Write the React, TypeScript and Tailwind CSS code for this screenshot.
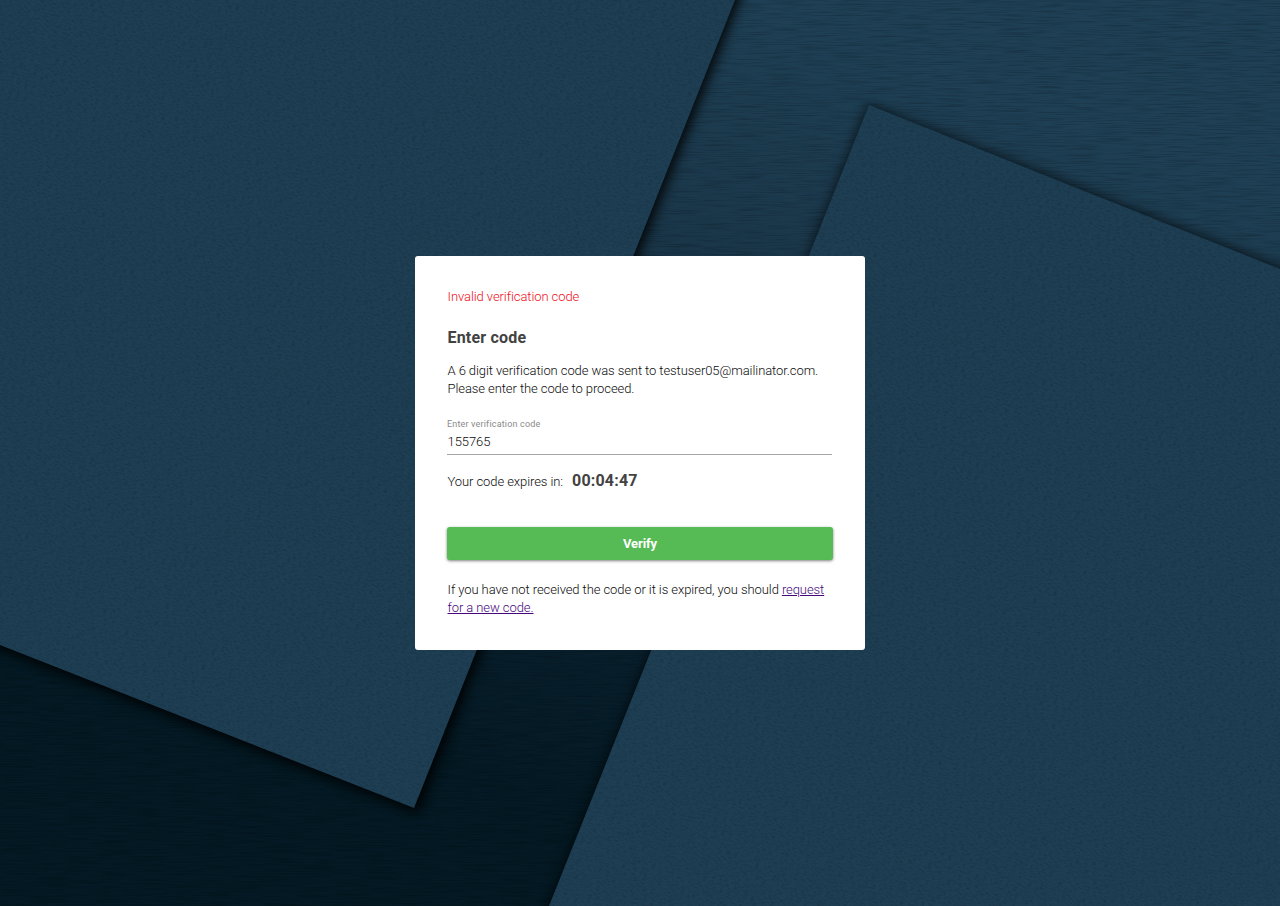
function Backdrop() {
  return (
    <svg className="absolute inset-0 h-full w-full" viewBox="0 0 1280 906" preserveAspectRatio="xMidYMid slice" aria-hidden="true">
      <defs>
        <linearGradient id="base" gradientUnits="userSpaceOnUse" x1="900" y1="60" x2="640" y2="830">
          <stop offset="0" stopColor="#1e3f54" />
          <stop offset="0.25" stopColor="#1b384b" />
          <stop offset="0.75" stopColor="#09202e" />
          <stop offset="1" stopColor="#041923" />
        </linearGradient>
        <filter id="shadow" x="-10%" y="-10%" width="120%" height="120%">
          <feGaussianBlur stdDeviation="6" />
        </filter>
        <filter id="grain" x="0" y="0" width="100%" height="100%" colorInterpolationFilters="sRGB">
          <feTurbulence type="fractalNoise" baseFrequency="0.03 0.9" numOctaves="2" seed="4" />
          <feColorMatrix values="0 0 0 0 0  0 0 0 0 0  0 0 0 0 0  2 0 0 0 -0.88" />
        </filter>
        <filter id="weave" x="0" y="0" width="100%" height="100%" colorInterpolationFilters="sRGB">
          <feTurbulence type="fractalNoise" baseFrequency="0.25 0.9" numOctaves="2" seed="9" />
          <feColorMatrix values="0 0 0 0 0  0 0 0 0 0  0 0 0 0 0  2 0 0 0 -0.88" />
        </filter>
        <clipPath id="sheets">
          <path d="M0 0H735L414 808L0 645ZM869 105L1280 269V906H549Z" />
        </clipPath>
      </defs>
      <rect width="1280" height="906" fill="url(#base)" />
      <rect width="1280" height="906" filter="url(#grain)" opacity="0.22" />
      <path d="M-50-50H760L418 814L-50 630Z" fill="#000" opacity="0.85" filter="url(#shadow)" />
      <path d="M868 103L1320 282V950H530Z" fill="#000" opacity="0.6" filter="url(#shadow)" />
      <path d="M0 0H735L414 808L0 645Z" fill="#1e3e53" />
      <path d="M869 105L1280 269V906H549Z" fill="#1e3e53" />
      <g clipPath="url(#sheets)">
        <rect x="-400" y="-500" width="2100" height="1900" filter="url(#weave)" transform="rotate(21.7 640 453)" opacity="0.2" />
      </g>
    </svg>
  );
}

export default function App() {
  return (
    <main className="relative isolate flex h-[906px] w-full items-center justify-center overflow-hidden bg-[#1e3e54] font-[Roboto,sans-serif] text-[13px] leading-[18px] font-light tracking-[-0.08px] text-[#0c0c0c]">
      <Backdrop />
      <section className="relative h-[394px] w-[450px] rounded-[3px] bg-white py-8 pr-8 pl-[32.5px]">
        <p className="text-[#f00d18]">Invalid verification code</p>
        <h1 className="mt-[22px] text-base leading-5 font-bold tracking-[0.2px] text-[#424242]">Enter code</h1>
        <p className="mt-3.5">
          A 6 digit verification code was sent to testuser05@mailinator.com.
          <br />
          Please enter the code to proceed.
        </p>
        <label className="mt-5 mr-px -ml-[0.5px] block border-b border-[#a6a6a6]">
          <span className="block text-[9px] leading-3 font-normal tracking-[0.17px] text-[#8a8a8a]">Enter verification code</span>
          <input className="block h-6 w-full pb-0.5 pl-[0.5px] outline-none" defaultValue="155765" />
        </label>
        <p className="mt-4 flex h-5 items-baseline gap-[9px]">
          Your code expires in: <strong className="text-base leading-5 font-bold tracking-[0.2px] text-[#424242]">00:04:47</strong>
        </p>
        <button className="mt-9 -ml-[0.5px] block h-[33px] w-[386px] rounded-[3px] bg-[#56ba55] text-[13px] font-bold text-white shadow-[0_1px_3px_rgba(0,0,0,0.5)]">Verify</button>
        <p className="mt-[21px]">
          If you have not received the code or it is expired, you should{" "}
          <a href="#" className="text-[#45087c] underline">request<br />for a new code.</a>
        </p>
      </section>
    </main>
  );
}
